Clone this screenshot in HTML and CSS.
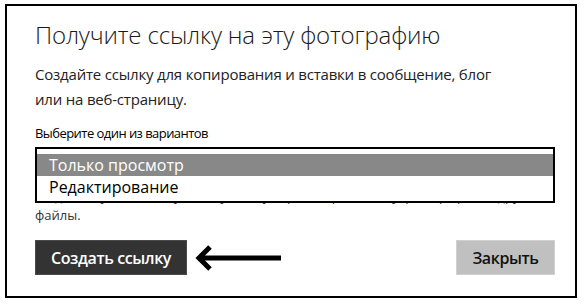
FILE: index.html
```html
<!DOCTYPE html>
<html lang="ru">
<head>
<meta charset="utf-8">
<link rel="stylesheet" href="styles.css">
</head>
<body>
<div class="dialog">
  <h1 class="title">Получите ссылку на эту фотографию</h1>
  <p class="desc">Создайте ссылку для копирования и вставки в сообщение, блог<br>или на веб-страницу.</p>
  <div class="label">Выберите один из вариантов</div>
  <div class="field">
    <p class="note">Люди, получившие эту ссылку, смогут просматривать эту фотографию и другие<br>файлы.</p>
    <ul class="listbox">
      <li class="option selected">Только просмотр</li>
      <li class="option">Редактирование</li>
    </ul>
  </div>
  <div class="actions">
    <button class="btn btn-primary">Создать ссылку</button>
    <svg class="arrow" width="88" height="26" viewBox="0 0 88 26">
      <path d="M4 13 H86" stroke="#000" stroke-width="5" fill="none"/>
      <path d="M15 2 L4 13 L15 24" stroke="#000" stroke-width="5" fill="none" stroke-linejoin="miter"/>
    </svg>
    <span class="spacer"></span>
    <button class="btn btn-secondary">Закрыть</button>
  </div>
</div>
</body>
</html>
```
FILE: styles.css
```css
html, body {
  margin: 0;
  padding: 0;
  background: #fff;
}
body {
  font-family: "Open Sans", "Noto Sans", sans-serif;
  color: #222;
}
.dialog {
  box-sizing: border-box;
  width: 572px;
  height: 294px;
  margin: 4px 0 0 5px;
  border: 2px solid #000;
  padding: 14px 20px 0 28px;
}
.title {
  margin: 0;
  font-size: 24px;
  line-height: 30px;
  font-weight: 300;
  color: #1a1a1a;
  letter-spacing: -0.15px;
}
.desc {
  margin: 12px 0 0;
  font-size: 15px;
  line-height: 25px;
  color: #222;
  letter-spacing: -0.2px;
}
.label {
  margin-top: 12px;
  font-size: 13px;
  line-height: 18px;
  color: #000;
  letter-spacing: -0.55px;
}
.field {
  position: relative;
  margin-top: 5px;
}
.note {
  margin: 0;
  padding-top: 40px;
  font-size: 13px;
  line-height: 19px;
  color: #333;
}
.listbox {
  position: absolute;
  top: 0;
  left: 0;
  width: 520px;
  box-sizing: border-box;
  margin: 0;
  padding: 5px 0 3px;
  list-style: none;
  background: #fff;
  border: 2px solid #000;
}
.option {
  height: 22px;
  line-height: 22px;
  padding-left: 12px;
  font-size: 16px;
  color: #000;
}
.option.selected {
  background: #888;
  color: #fff;
}
.actions {
  display: flex;
  align-items: center;
  margin-top: 15px;
}
.btn {
  height: 35px;
  box-sizing: border-box;
  font-family: "Open Sans", "Noto Sans", sans-serif;
  font-size: 16px;
  font-weight: 600;
  letter-spacing: -0.4px;
  border: 1px solid transparent;
  padding: 0;
}
.btn-primary {
  width: 152px;
  background: #333;
  border-color: #4a4a4a;
  color: #fff;
}
.btn-secondary {
  width: 99px;
  background: #c0c0c0;
  border-color: #d0d0d0;
  color: #111;
}
.arrow {
  margin-left: 8px;
  display: block;
}
.spacer {
  flex: 1;
}
```
